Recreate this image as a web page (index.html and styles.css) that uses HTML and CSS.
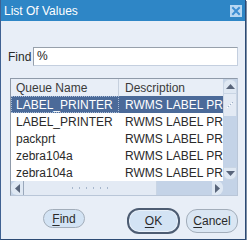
FILE: index.html
```html
<!DOCTYPE html>
<html>
<head>
<meta charset="utf-8">
<link rel="stylesheet" href="styles.css">
</head>
<body>
<div class="win">
  <div class="titlebar">
    <span class="title">List Of Values</span>
    <span class="close">
      <svg width="12" height="12" viewBox="0 0 12 12">
        <rect x="0" y="0" width="12" height="12" fill="#b7d7f2"/>
        <path d="M3 3 L9 9 M9 3 L3 9" stroke="#3b8ed3" stroke-width="2" stroke-linecap="square"/>
      </svg>
    </span>
  </div>
  <div class="content">
    <div class="find-row">
      <span class="find-label">Find</span>
      <div class="input">%</div>
    </div>
    <div class="table">
      <div class="data">
        <div class="row header"><div class="c1">Queue Name</div><div class="c2">Description</div></div>
        <div class="row sel"><div class="c1 focus">LABEL_PRINTER</div><div class="c2">RWMS LABEL PR</div></div>
        <div class="row"><div class="c1">LABEL_PRINTER</div><div class="c2">RWMS LABEL PR</div></div>
        <div class="row"><div class="c1">packprt</div><div class="c2">RWMS LABEL PR</div></div>
        <div class="row"><div class="c1">zebra104a</div><div class="c2">RWMS LABEL PR</div></div>
        <div class="row"><div class="c1">zebra104a</div><div class="c2">RWMS LABEL PR</div></div>
      </div>
      <div class="vscroll">
        <div class="varrow up"><svg width="9" height="5" viewBox="0 0 9 5"><path d="M0 5 L4.5 0 L9 5 Z" fill="#59657a"/></svg></div>
        <div class="vthumb">
          <svg width="8" height="6" viewBox="0 0 8 6"><rect x="6" y="0" width="1" height="1" fill="#9fb0c6"/><rect x="4" y="2" width="1" height="1" fill="#9fb0c6"/><rect x="2" y="4" width="1" height="1" fill="#9fb0c6"/><rect x="1" y="5" width="1" height="1" fill="#fff"/><rect x="3" y="3" width="1" height="1" fill="#fff"/><rect x="5" y="1" width="1" height="1" fill="#fff"/></svg>
        </div>
        <div class="vtrack"></div>
        <div class="varrow down"><svg width="9" height="5" viewBox="0 0 9 5"><path d="M0 0 L4.5 5 L9 0 Z" fill="#59657a"/></svg></div>
      </div>
      <div class="hscroll">
        <div class="harrow left"><svg width="5" height="9" viewBox="0 0 5 9"><path d="M5 0 L0 4.5 L5 9 Z" fill="#59657a"/></svg></div>
        <div class="hthumb"><span class="grip"></span></div>
        <div class="htrack"></div>
        <div class="harrow right"><svg width="5" height="9" viewBox="0 0 5 9"><path d="M0 0 L5 4.5 L0 9 Z" fill="#59657a"/></svg></div>
      </div>
      <div class="corner"></div>
    </div>
    <div class="buttons">
      <button class="btn find"><u>F</u>ind</button>
      <button class="btn ok"><u>O</u>K</button>
      <button class="btn cancel"><u>C</u>ancel</button>
    </div>
  </div>
</div>
</body>
</html>
```
FILE: styles.css
```css
html, body {
  margin: 0;
  padding: 0;
  background: #ffffff;
}
body {
  font-family: "Liberation Sans", Arial, sans-serif;
  font-size: 12px;
  color: #2a2a2a;
}
.win {
  width: 244px;
  height: 239px;
  border-left: 1px solid #3f6192;
  border-right: 1px solid #2c4a74;
  border-bottom: 1px solid #2c4a74;
  box-shadow: 1px 1px 0 #7d8ea6;
  background: #e8eef7;
  display: flex;
  flex-direction: column;
}
.titlebar {
  height: 21px;
  background: #2e86c6;
  display: flex;
  align-items: center;
  padding-left: 3px;
  color: #ffffff;
}
.title {
  font-size: 12px;
}
.close {
  margin-left: auto;
  margin-right: 3px;
  width: 12px;
  height: 12px;
  display: flex;
}
.content {
  display: flex;
  flex-direction: column;
  padding: 0 7px;
}
.find-row {
  margin-top: 26px;
  display: flex;
  align-items: center;
}
.find-label {
  width: 25px;
}
.input {
  width: 200px;
  height: 17px;
  line-height: 17px;
  background: #ffffff;
  border-top: 1px solid #97a0ab;
  border-left: 1px solid #97a0ab;
  border-right: 1px solid #c4cfdf;
  border-bottom: 1px solid #c4cfdf;
  padding-left: 3px;
  color: #222;
}
.table {
  margin-top: 12px;
  margin-left: 2px;
  width: 226px;
  display: grid;
  grid-template-columns: 212px 14px;
  grid-template-rows: 102px 14px;
  border-top: 1px solid #8f9aa9;
  border-left: 1px solid #8f9aa9;
  border-right: 1px solid #b9c6d8;
  border-bottom: 1px solid #b9c6d8;
}
.data {
  background: #ffffff;
  overflow: hidden;
}
.row {
  display: grid;
  grid-template-columns: 108px 104px;
  height: 17px;
  line-height: 17px;
}
.row > div {
  white-space: nowrap;
  overflow: hidden;
  padding-top: 1px;
  box-sizing: border-box;
}
.c1 {
  padding-left: 5px;
}
.c2 {
  padding-left: 6px;
}
.header {
  background: #e8eef7;
  color: #3a3a3a;
}
.header .c1 {
  border-right: 1px solid #c6d0de;
}
.sel {
  background: #4b6a99;
  color: #ffffff;
}
.sel .focus {
  outline: 1px dotted #a9bbd6;
  outline-offset: -1px;
}
.vscroll {
  background: #c4d3e7;
  display: flex;
  flex-direction: column;
}
.varrow {
  background: #dfe8f3;
  display: flex;
  align-items: center;
  justify-content: center;
  border: 1px solid #c9d5e4;
}
.varrow.up {
  border-radius: 6px 6px 0 0;
  height: 13px;
}
.varrow.down {
  border-radius: 0 0 6px 6px;
  height: 11px;
  margin-top: auto;
  margin-bottom: 1px;
}
.vthumb {
  height: 22px;
  background: #e3eaf4;
  border-left: 1px solid #c9d5e4;
  border-right: 1px solid #c9d5e4;
  display: flex;
  align-items: center;
  justify-content: center;
  box-sizing: border-box;
}
.vtrack {
  flex: 1;
}
.hscroll {
  background: #c4d3e7;
  display: flex;
}
.harrow {
  background: #dfe8f3;
  display: flex;
  align-items: center;
  justify-content: center;
}
.harrow.left {
  width: 13px;
  border-radius: 6px 0 0 6px;
  border-right: 1px solid #9aa8bb;
  box-sizing: border-box;
}
.harrow.right {
  width: 11px;
  margin-left: auto;
  border-radius: 0 6px 6px 0;
}
.hthumb {
  width: 133px;
  background: #e3eaf4;
  border-right: 1px solid #c9d5e4;
  box-sizing: border-box;
  display: flex;
  align-items: center;
  justify-content: center;
}
.grip {
  width: 42px;
  height: 5px;
  background-image: radial-gradient(circle, #a6b6cc 0.7px, transparent 0.9px);
  background-size: 7px 4px;
}
.htrack {
  flex: 0 0 0;
}
.corner {
  background: #c4d3e7;
}
.buttons {
  margin-top: 12px;
  display: flex;
  align-items: flex-start;
}
.btn {
  font-family: "Liberation Sans", Arial, sans-serif;
  font-size: 12px;
  color: #2a2a2a;
  padding: 0;
  background: #d3e3f4;
  border: 1px solid #a2adba;
  border-radius: 10px;
}
.btn u {
  text-decoration-thickness: 1px;
  text-underline-offset: 2px;
}
.btn.find {
  margin-left: 35px;
  margin-top: 1px;
  width: 42px;
  height: 19px;
}
.btn.ok {
  margin-left: 42px;
  width: 53px;
  height: 26px;
  border: 2px solid #4d5c72;
  border-radius: 12px;
  background: #d3e3f4;
  box-shadow: inset 0 0 0 1px #e8f0f9;
}
.btn.cancel {
  margin-left: 6px;
  margin-top: 1px;
  width: 52px;
  height: 24px;
  border-radius: 11px;
  background: #dae6f3;
}
```
